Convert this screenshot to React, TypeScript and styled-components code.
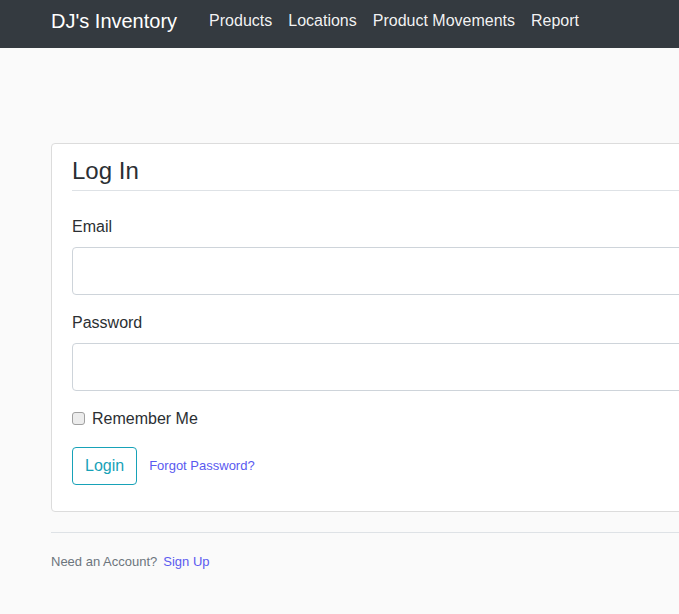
import React from "react";
import styled, { createGlobalStyle } from "styled-components";

const Global = createGlobalStyle`
  html, body { margin: 0; padding: 0; }
  body {
    background: #fafafa;
    font-family: "Liberation Sans", Arial, sans-serif;
    color: #2b2f33;
    overflow-x: hidden;
    min-height: 614px;
  }
  * { box-sizing: border-box; }
`;

const NavBar = styled.nav`
  height: 48px;
  background: #343a40;
  display: flex;
  align-items: center;
  padding-left: 51px;
`;

const Brand = styled.a`
  font-size: 20px;
  color: #fff;
  text-decoration: none;
  margin-right: 24px;
  margin-top: -5px;
`;

const NavList = styled.div`
  display: flex;
`;

const NavLink = styled.a`
  font-size: 16px;
  color: rgba(255, 255, 255, 0.95);
  text-decoration: none;
  padding: 0 8px;
  margin-top: -6px;
`;

const Container = styled.main`
  width: 1100px;
  margin-left: 51px;
  padding-top: 95px;
`;

const Card = styled.section`
  background: #fff;
  border: 1px solid #dcdcdc;
  border-radius: 4px;
  padding: 13px 20px 26px;
`;

const Title = styled.h2`
  margin: 0 0 24px;
  font-size: 24px;
  font-weight: 400;
  line-height: 1.2;
  padding-bottom: 4px;
  border-bottom: 1px solid #dee2e6;
`;

const Group = styled.div`
  margin-bottom: 16px;
`;

const Label = styled.label`
  display: block;
  font-size: 16px;
  line-height: 24px;
  margin-bottom: 8px;
`;

const Input = styled.input`
  display: block;
  width: 100%;
  height: 48px;
  border: 1px solid #ced4da;
  border-radius: 4px;
  padding: 8px 16px;
  font-size: 20px;
  background: #fff;
`;

const CheckRow = styled.div`
  display: flex;
  align-items: center;
  margin-bottom: 16px;
  font-size: 16px;
  line-height: 24px;
`;

const Check = styled.input`
  appearance: none;
  margin: 0 7px 0 0;
  width: 13px;
  height: 13px;
  border: 1px solid #a0a0a0;
  border-radius: 3px;
  background: #ececec;
`;

const Actions = styled.div`
  display: flex;
  align-items: center;
  gap: 12px;
`;

const Button = styled.button`
  font-family: inherit;
  font-size: 16px;
  line-height: 24px;
  padding: 6px 12px;
  color: #17a2b8;
  background: transparent;
  border: 1px solid #17a2b8;
  border-radius: 4px;
`;

const SmallLink = styled.a`
  font-size: 13px;
  color: #5a5af0;
  text-decoration: none;
`;

const Rule = styled.hr`
  margin: 20px 0 0;
  border: 0;
  border-top: 1px solid #dee2e6;
`;

const Footer = styled.p`
  margin: 19px 0 0;
  font-size: 13px;
  line-height: 20px;
  color: #6c757d;
  display: flex;
  gap: 6px;
`;

export default function App() {
  return (
    <>
      <Global />
      <NavBar>
        <Brand href="#">DJ's Inventory</Brand>
        <NavList>
          <NavLink href="#">Products</NavLink>
          <NavLink href="#">Locations</NavLink>
          <NavLink href="#">Product Movements</NavLink>
          <NavLink href="#">Report</NavLink>
        </NavList>
      </NavBar>
      <Container>
        <Card>
          <Title>Log In</Title>
          <Group>
            <Label>Email</Label>
            <Input type="email" />
          </Group>
          <Group>
            <Label>Password</Label>
            <Input type="password" />
          </Group>
          <CheckRow>
            <Check type="checkbox" />
            <span>Remember Me</span>
          </CheckRow>
          <Actions>
            <Button>Login</Button>
            <SmallLink href="#">Forgot Password?</SmallLink>
          </Actions>
        </Card>
        <Rule />
        <Footer>
          <span>Need an Account?</span>
          <SmallLink href="#">Sign Up</SmallLink>
        </Footer>
      </Container>
    </>
  );
}
